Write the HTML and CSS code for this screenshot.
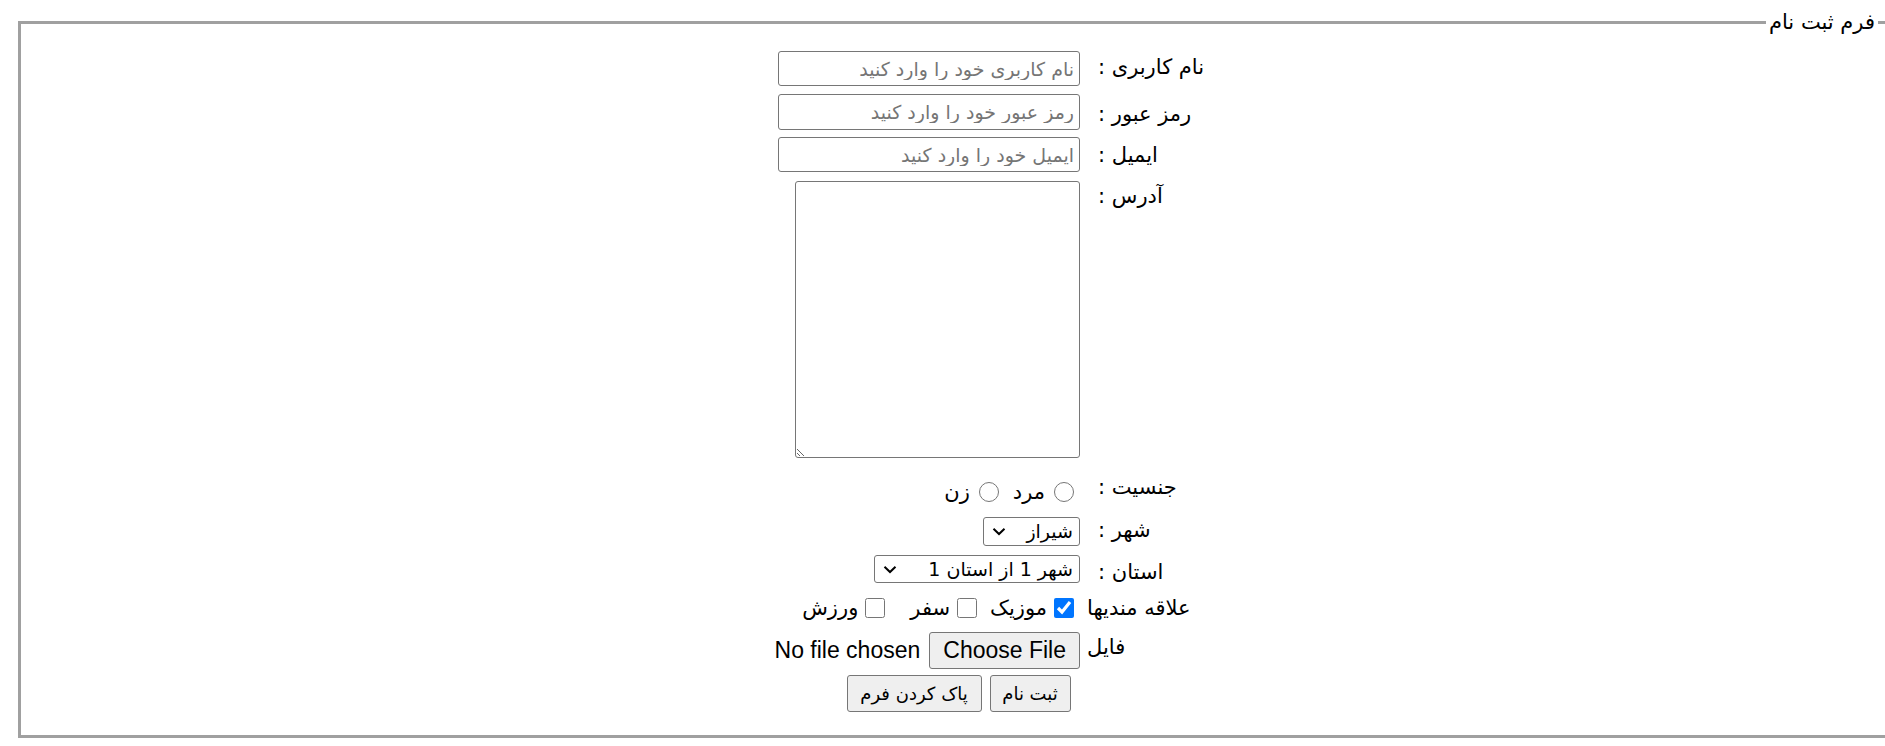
FILE: index.html
```html
<!DOCTYPE html>
<html lang="fa">
<head>
<meta charset="utf-8">
<title>فرم ثبت نام</title>
<link rel="stylesheet" href="styles.css">
</head>
<body>
<form class="signup" action="#" onsubmit="return false">
  <fieldset class="panel" dir="rtl">
    <legend class="panel-title">فرم ثبت نام</legend>
    <div class="form-wrap">
      <div class="form-grid">
        <label class="field-label label-colon row-user" for="username">نام کاربری :</label>
        <div class="field"><input class="text-input" id="username" type="text" placeholder="نام کاربری خود را وارد کنید"></div>

        <label class="field-label label-colon row-pass" for="password">رمز عبور :</label>
        <div class="field"><input class="text-input text-input-tall" id="password" type="password" placeholder="رمز عبور خود را وارد کنید"></div>

        <label class="field-label label-colon row-mail" for="email">ایمیل :</label>
        <div class="field"><input class="text-input" id="email" type="email" placeholder="ایمیل خود را وارد کنید"></div>

        <label class="field-label label-colon row-address" for="address">آدرس :</label>
        <div class="field"><textarea class="address" id="address"></textarea></div>

        <span class="field-label label-colon row-gender">جنسیت :</span>
        <div class="field choices choices-gender">
          <label class="choice"><input class="radio" type="radio" name="gender">مرد</label>
          <label class="choice choice-next"><input class="radio" type="radio" name="gender">زن</label>
        </div>

        <label class="field-label label-colon row-city" for="city">شهر :</label>
        <div class="field">
          <span class="select-wrap">
            <select class="select select-city" id="city"><option>شیراز</option></select>
            <svg class="chevron" width="14" height="9" viewBox="0 0 14 9" aria-hidden="true"><path d="M1.5 1.8 L7 7 L12.5 1.8" fill="none" stroke="#000" stroke-width="2"/></svg>
          </span>
        </div>

        <label class="field-label label-colon row-province" for="province">استان :</label>
        <div class="field">
          <span class="select-wrap">
            <select class="select select-province" id="province"><option>شهر 1 از استان 1</option></select>
            <svg class="chevron" width="14" height="9" viewBox="0 0 14 9" aria-hidden="true"><path d="M1.5 1.8 L7 7 L12.5 1.8" fill="none" stroke="#000" stroke-width="2"/></svg>
          </span>
        </div>

        <span class="field-label row-hobbies">علاقه مندیها</span>
        <div class="field choices choices-hobbies">
          <label class="choice"><input class="check" type="checkbox" checked>موزیک</label>
          <label class="choice choice-next"><input class="check" type="checkbox">سفر</label>
          <label class="choice choice-wide"><input class="check" type="checkbox">ورزش</label>
        </div>

        <label class="field-label row-file" for="file">فایل</label>
        <div class="field"><input class="file-input" id="file" type="file"></div>
      </div>
    </div>
    <div class="actions">
      <button class="btn btn-submit" type="submit">ثبت نام</button>
      <button class="btn btn-reset" type="reset">پاک کردن فرم</button>
    </div>
  </fieldset>
</form>
</body>
</html>
```

FILE: styles.css
```css
html {
  overflow: hidden;
}

body {
  margin: 8px 0 0;
  background: #ffffff;
  color: #000000;
  font-family: "DejaVu Sans", "Liberation Sans", sans-serif;
  font-size: 21px;
}

.signup {
  margin: 0;
}

.panel {
  margin: 0 0 0 18px;
  width: 1881px;
  box-sizing: border-box;
  border: 3px solid #a0a0a0;
  padding: 15px 18px 23px;
  min-inline-size: 0;
}

.panel-title {
  padding: 0 3px;
  font-size: 21px;
  line-height: 28px;
}

.form-wrap {
  display: flex;
  justify-content: center;
}

.form-grid {
  margin-left: 63px;
  display: grid;
  grid-template-columns: 120px 307px;
  grid-template-rows: 43px 43px 44px 285px 51px 38px 37px 40px 37px;
  column-gap: 7px;
  align-items: start;
}

/* labels */
.field-label {
  text-align: left;
  white-space: nowrap;
  line-height: 24px;
}

.label-colon {
  padding-left: 11px;
}

.row-user { padding-top: 4px; }
.row-pass { padding-top: 8px; }
.row-mail { padding-top: 6px; }
.row-address { padding-top: 3px; }
.row-gender { padding-top: 9px; }
.row-city { padding-top: 1px; }
.row-province { padding-top: 5px; }
.row-hobbies { padding-top: 4px; }
.row-file { padding-top: 3px; }

/* fields */
.field {
  display: flex;
  justify-content: flex-start;
  white-space: nowrap;
}

.text-input {
  width: 302px;
  height: 35px;
  box-sizing: border-box;
  margin: 0;
  padding: 1px 5px;
  border: 1px solid #767676;
  border-radius: 3px;
  background: #ffffff;
  font-family: "DejaVu Sans", "Liberation Sans", sans-serif;
  font-size: 19px;
  color: #000000;
}

.text-input-tall {
  height: 36px;
}

.text-input::placeholder {
  color: #757575;
}

.address {
  display: block;
  width: 285px;
  height: 277px;
  box-sizing: border-box;
  margin: 0;
  padding: 2px;
  border: 1px solid #767676;
  border-radius: 3px;
  font-family: "DejaVu Sans", "Liberation Sans", sans-serif;
  font-size: 19px;
}

/* radios / checkboxes */
.choices-gender {
  height: 51px;
  align-items: center;
}

.choices-hobbies {
  height: 28px;
  padding-top: 2px;
  align-items: center;
}

.choice {
  display: inline-flex;
  align-items: center;
}

.choice-next {
  margin-right: 8px;
}

.choice-wide {
  margin-right: 20px;
}

.radio {
  width: 20px;
  height: 20px;
  margin: 0 6px 0 9px;
}

.check {
  width: 20px;
  height: 20px;
  margin: 0 6px 0 7px;
  accent-color: #0075ff;
}

.choices-hobbies .choice-next .check,
.choices-hobbies .choice-wide .check {
  margin-right: 5px;
}

/* selects: the chevron shares the select's grid cell */
.select-wrap {
  display: inline-grid;
  align-items: center;
}

.select-wrap > * {
  grid-area: 1 / 1;
}

.select {
  height: 29px;
  box-sizing: border-box;
  margin: 0;
  padding: 0 6px 0 28px;
  appearance: none;
  -webkit-appearance: none;
  font-family: "DejaVu Sans", "Liberation Sans", sans-serif;
  font-size: 19px;
  line-height: 27px;
  color: #000000;
  background: #ffffff;
  border: 1px solid #767676;
  border-radius: 3px;
}

.select-city {
  width: 97px;
}

.select-province {
  width: 206px;
  height: 28px;
  line-height: 26px;
}

.chevron {
  justify-self: end;
  margin-left: 9px;
  pointer-events: none;
}

/* file */
.file-input {
  width: 307px;
  margin: 0;
  font-family: "Liberation Sans", "DejaVu Sans", sans-serif;
  font-size: 23px;
}

.file-input::file-selector-button {
  height: 37px;
  margin: 0 0 0 9px;
  padding: 0 13px;
  border: 1px solid #767676;
  border-radius: 3px;
  background: #efefef;
  font: inherit;
  color: #000000;
}

/* actions */
.actions {
  display: flex;
  justify-content: center;
  gap: 8px;
  margin-top: 6px;
}

.btn {
  height: 37px;
  box-sizing: border-box;
  margin: 0;
  padding: 0;
  border: 1px solid #767676;
  border-radius: 3px;
  background: #efefef;
  color: #000000;
  font-family: "DejaVu Sans", "Liberation Sans", sans-serif;
  font-size: 18px;
}

.btn-submit {
  width: 81px;
}

.btn-reset {
  width: 135px;
}
```
